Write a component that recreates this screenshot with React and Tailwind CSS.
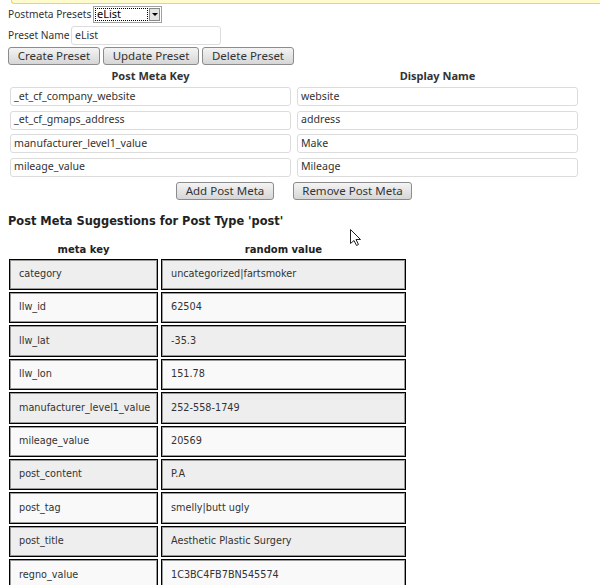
import React from 'react';

const presetRows = [
  { key: '_et_cf_company_website', name: 'website' },
  { key: '_et_cf_gmaps_address', name: 'address' },
  { key: 'manufacturer_level1_value', name: 'Make' },
  { key: 'mileage_value', name: 'Mileage' },
];

const suggestions = [
  ['category', 'uncategorized|fartsmoker'],
  ['llw_id', '62504'],
  ['llw_lat', '-35.3'],
  ['llw_lon', '151.78'],
  ['manufacturer_level1_value', '252-558-1749'],
  ['mileage_value', '20569'],
  ['post_content', 'P.A'],
  ['post_tag', 'smelly|butt ugly'],
  ['post_title', 'Aesthetic Plastic Surgery'],
  ['regno_value', '1C3BC4FB7BN545574'],
];

const ui = { fontFamily: '"Noto Sans", "DejaVu Sans", sans-serif' };
const dv = { fontFamily: '"DejaVu Sans", sans-serif' };

const Btn = ({ children, className = '' }) => (
  <button
    className={`h-[18px] px-[4px] rounded-[3px] border border-[#8c8c8c] bg-gradient-to-b from-[#f4f4f4] to-[#d6d6d6] text-[11.5px] leading-none text-[#333] whitespace-nowrap ${className}`}
    style={ui}
  >
    {children}
  </button>
);

const TextBox = ({ value, className = '' }) => (
  <div
    className={`h-[19px] border border-[#dcdcdc] rounded-[3px] bg-white px-[3px] flex items-center text-[10.6px] text-[#333] whitespace-nowrap ${className}`}
    style={ui}
  >
    {value}
  </div>
);

const Cursor = () => (
  <svg className="absolute left-[350px] top-[229px]" width="12" height="18" viewBox="0 0 12 18">
    <path d="M0.5 0.5 L0.5 14.5 L4 11.5 L6.5 16.5 L8.5 15.5 L6 10.5 L10.5 10.5 Z" fill="white" stroke="#222" strokeWidth="1" strokeLinejoin="round" />
  </svg>
);

export default function App() {
  return (
    <div className="relative w-[600px] h-[585px] overflow-hidden bg-white text-[#333]">
      {/* notice remnant */}
      <div className="ml-[11px] h-[4px] bg-[#fffbcc] border-b border-l border-[#e6db55] rounded-bl-[3px]" />

      <div className="pl-[8px] pt-[2px]">
        <div className="flex items-center h-[17px] text-[10.2px]" style={ui}>
          <span className="w-[85px] whitespace-nowrap">Postmeta Presets</span>
          <div className="w-[69px] h-[17px] border border-[#a0a0a0] bg-white flex items-center">
            <div className="ml-[1px] flex-1 h-[13px] border border-dotted border-black flex items-center px-[1px] text-[11px] text-black">eList</div>
            <div className="w-[11px] h-[13px] mx-[1px] bg-[#e4e4e4] border border-[#888] flex items-center justify-center">
              <div className="w-0 h-0 border-l-[3px] border-r-[3px] border-t-[3px] border-l-transparent border-r-transparent border-t-black" />
            </div>
          </div>
        </div>

        <div className="flex items-center mt-[3px] h-[19px] text-[10.2px]" style={ui}>
          <span className="w-[63px] whitespace-nowrap">Preset Name</span>
          <TextBox value="eList" className="w-[150px]" />
        </div>

        <div className="flex gap-[3px] mt-[2px]">
          <Btn className="w-[92px]">Create Preset</Btn>
          <Btn className="w-[96px]">Update Preset</Btn>
          <Btn className="w-[92px]">Delete Preset</Btn>
        </div>
      </div>

      <div className="pl-[10px] w-[578px] mt-[3px]">
        <div className="grid grid-cols-2 gap-x-[6px] text-[11px] font-bold text-[#333] h-[15px]" style={ui}>
          <div className="text-center">Post Meta Key</div>
          <div className="text-center">Display Name</div>
        </div>
        <div className="grid grid-cols-2 gap-x-[6px] gap-y-[4.5px] mt-[4px]">
          {presetRows.map((r) => (
            <React.Fragment key={r.key}>
              <TextBox value={r.key} />
              <TextBox value={r.name} />
            </React.Fragment>
          ))}
        </div>
      </div>

      <div className="flex ml-[176px] mt-[5px] gap-[19px]">
        <Btn className="w-[98px]">Add Post Meta</Btn>
        <Btn className="w-[119px]">Remove Post Meta</Btn>
      </div>

      <h3 className="pl-[8px] mt-[13px] text-[11.4px] font-bold text-[#222] whitespace-nowrap" style={dv}>
        Post Meta Suggestions for Post Type 'post'
      </h3>

      <div className="pl-[9px] w-[407px] mt-[12px]" style={dv}>
        <div className="grid grid-cols-[149px_245px] gap-x-[3px] text-[10px] font-bold text-[#222]">
          <div className="text-center">meta key</div>
          <div className="text-center">random value</div>
        </div>
        <div className="grid grid-cols-[149px_245px] gap-x-[3px] gap-y-[2px] auto-rows-[31.4px] mt-[2px] text-[9.7px] text-[#333]">
          {suggestions.map(([k, v], i) => (
            <React.Fragment key={k}>
              <div className={`border border-black shadow-[inset_0_0_0_1px_#999] flex items-center pl-[9px] whitespace-nowrap ${i % 2 === 0 ? 'bg-[#eeeeee]' : 'bg-[#f9f9f9]'}`}>{k}</div>
              <div className={`border border-black shadow-[inset_0_0_0_1px_#999] flex items-center pl-[9px] whitespace-nowrap ${i % 2 === 0 ? 'bg-[#eeeeee]' : 'bg-[#f9f9f9]'}`}>{v}</div>
            </React.Fragment>
          ))}
        </div>
      </div>

      <Cursor />
    </div>
  );
}
